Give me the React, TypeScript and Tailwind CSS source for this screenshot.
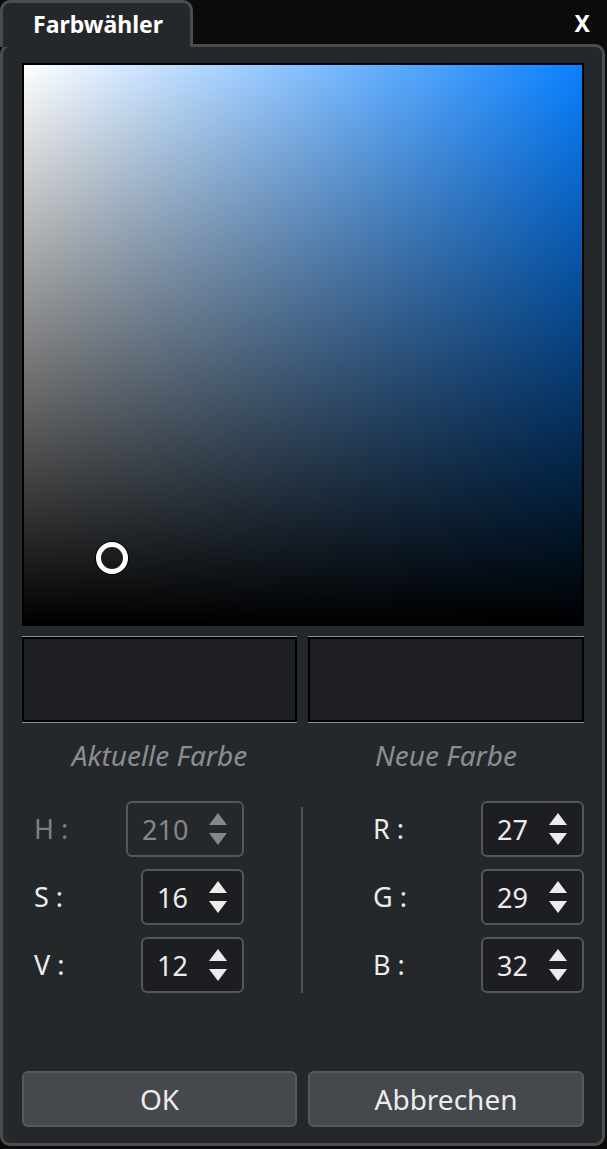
import React from 'react'

const font = { fontFamily: '"Noto Sans", "Open Sans", sans-serif' }

function Arrows({ dim }: { dim?: boolean }): React.ReactElement {
  const fill = dim ? '#85878a' : '#ececec'
  return (
    <svg width="20" height="33" viewBox="0 0 20 33">
      <polygon points="10,0 19,12 1,12" fill={fill} />
      <polygon points="1,20 19,20 10,32" fill={fill} />
    </svg>
  )
}

interface SpinProps {
  label: string
  value: number
  dim?: boolean
  wide?: boolean
}

function Spin({ label, value, dim, wide }: SpinProps): React.ReactElement {
  return (
    <div className="flex h-[56px] items-center justify-between">
      <span className={dim ? 'text-[27px] text-[#7d7f82]' : 'text-[27px] text-[#ececec]'}>
        {label}
      </span>
      <div
        className={
          'flex h-[56px] items-center justify-between rounded-[6px] border-2 border-[#54575a] px-[14px] ' +
          (wide ? 'w-[118px] ' : 'w-[103px] ') +
          (dim ? 'bg-[#25282b] text-[#85878a]' : 'bg-[#1d1e21] text-[#ececec]')
        }
      >
        <span className="text-[27px] leading-none">{value}</span>
        <Arrows dim={dim} />
      </div>
    </div>
  )
}

export default function App(): React.ReactElement {
  return (
    <div className="flex h-[1149px] w-[607px] flex-col bg-[#0b0b0b] pr-[2px] pb-[3px]" style={font}>
      <div className="flex items-start">
        <div className="relative z-10 -mb-[3px] flex h-[47px] w-[193px] items-center rounded-t-[10px] border-x-[3px] border-t-[3px] border-[#4b4c4f] bg-[#25282b] pl-[30px] pb-[2px]">
          <span className="text-[23px] font-bold text-white">Farbwähler</span>
        </div>
        <div className="flex flex-1 justify-end pr-[15px] pt-[6px]">
          <span className="text-[23px] font-bold text-white">X</span>
        </div>
      </div>
      <div className="flex flex-1 flex-col rounded-[10px] border-[3px] border-[#4b4c4f] bg-[#25282b] pl-[19px] pr-[18px]">
        <div className="mt-[16px] h-[563px] border-2 border-black">
          <div className="relative h-full w-full bg-linear-to-r/srgb from-white to-[#0a80ff]">
            <div className="h-full w-full bg-linear-to-t/srgb from-black to-transparent" />
            <div className="absolute left-[71px] top-[476px] h-[34px] w-[34px] rounded-full border border-black">
              <div className="h-full w-full rounded-full border-[5px] border-white" />
            </div>
          </div>
        </div>

        <div className="mt-[10px] grid grid-cols-[275px_1fr] gap-[11px]">
          <div className="h-[87px] border-y border-[#8d8e90]">
            <div className="h-full border-2 border-black bg-[#1e1f22]" />
          </div>
          <div className="h-[87px] border-y border-[#8d8e90]">
            <div className="h-full border-2 border-black bg-[#1e1f22]" />
          </div>
        </div>

        <div className="mt-[11px] grid grid-cols-[275px_1fr] gap-[11px] text-[28px] italic text-[#8b8d90]">
          <div className="text-center">Aktuelle Farbe</div>
          <div className="text-center">Neue Farbe</div>
        </div>

        <div className="mt-[25px] flex">
          <div className="flex w-[275px] flex-col gap-[12px] pl-[12px] pr-[53px]">
            <Spin label="H :" value={210} dim wide />
            <Spin label="S :" value={16} />
            <Spin label="V :" value={12} />
          </div>
          <div className="ml-[4px] mt-[6px] h-[186px] w-[2px] bg-[#4d4f52]" />
          <div className="ml-[5px] flex flex-1 flex-col gap-[12px] pl-[65px]">
            <Spin label="R :" value={27} />
            <Spin label="G :" value={29} />
            <Spin label="B :" value={32} />
          </div>
        </div>

        <div className="mt-auto mb-[16px] grid grid-cols-[275px_1fr] gap-[11px]">
          <button className="h-[56px] rounded-[6px] border-2 border-[#56595d] bg-[#45484c] text-[28px] text-[#ececec]">
            OK
          </button>
          <button className="h-[56px] rounded-[6px] border-2 border-[#56595d] bg-[#45484c] text-[28px] text-[#ececec]">
            Abbrechen
          </button>
        </div>
      </div>
    </div>
  )
}
